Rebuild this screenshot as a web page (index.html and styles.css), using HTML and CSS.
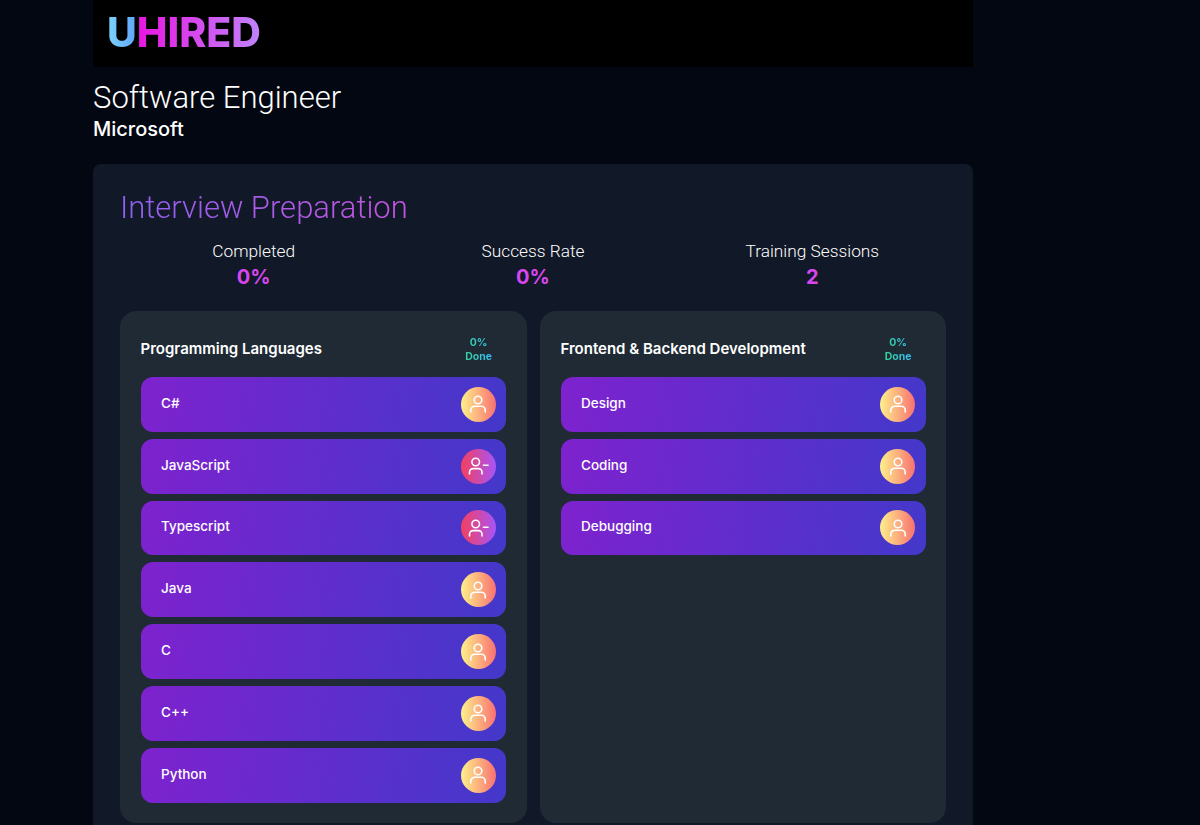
FILE: index.html
```html
<!DOCTYPE html>
<html lang="en">
<head>
  <meta charset="UTF-8">
  <title>UHIRED - Interview Preparation</title>
  <meta name="viewport" content="width=device-width, initial-scale=1.0">
  <link rel="stylesheet" href="styles.css">
</head>
<body>

  <svg class="icon-defs" width="0" height="0" aria-hidden="true">
    <symbol id="icon-user" viewBox="0 0 24 24">
      <path d="M4.8 20v-1.8a4 4 0 0 1 4-4h6.4a4 4 0 0 1 4 4V20"/>
      <circle cx="12" cy="8" r="3.8"/>
    </symbol>
    <symbol id="icon-user-minus" viewBox="0 0 24 24">
      <path d="M3.5 20v-1.8a3.6 3.6 0 0 1 3.6-3.6h5.3a3.6 3.6 0 0 1 3.6 3.6V20"/>
      <circle cx="9.7" cy="8" r="3.8"/>
      <line x1="17.4" y1="11.3" x2="22" y2="11.3"/>
    </symbol>
  </svg>

  <div class="container">
    <header class="topbar">
      <div class="logo"><span class="logo-u">U</span><span class="logo-rest">HIRED</span></div>
    </header>

    <div class="job">
      <h1>Software Engineer</h1>
      <p>Microsoft</p>
    </div>

    <main class="prep">
      <h2>Interview Preparation</h2>

      <div class="stats">
        <div class="stat">
          <div class="stat-label">Completed</div>
          <div class="stat-value">0%</div>
        </div>
        <div class="stat">
          <div class="stat-label">Success Rate</div>
          <div class="stat-value">0%</div>
        </div>
        <div class="stat">
          <div class="stat-label">Training Sessions</div>
          <div class="stat-value">2</div>
        </div>
      </div>

      <div class="panels">
        <section class="panel">
          <div class="panel-head">
            <h3>Programming Languages</h3>
            <div class="done">0%<br>Done</div>
          </div>
          <div class="topic">
            <span>C#</span>
            <div class="avatar"><svg><use href="#icon-user"/></svg></div>
          </div>
          <div class="topic">
            <span>JavaScript</span>
            <div class="avatar avatar-minus"><svg><use href="#icon-user-minus"/></svg></div>
          </div>
          <div class="topic">
            <span>Typescript</span>
            <div class="avatar avatar-minus"><svg><use href="#icon-user-minus"/></svg></div>
          </div>
          <div class="topic">
            <span>Java</span>
            <div class="avatar"><svg><use href="#icon-user"/></svg></div>
          </div>
          <div class="topic">
            <span>C</span>
            <div class="avatar"><svg><use href="#icon-user"/></svg></div>
          </div>
          <div class="topic">
            <span>C++</span>
            <div class="avatar"><svg><use href="#icon-user"/></svg></div>
          </div>
          <div class="topic">
            <span>Python</span>
            <div class="avatar"><svg><use href="#icon-user"/></svg></div>
          </div>
        </section>

        <section class="panel">
          <div class="panel-head">
            <h3>Frontend &amp; Backend Development</h3>
            <div class="done">0%<br>Done</div>
          </div>
          <div class="topic">
            <span>Design</span>
            <div class="avatar"><svg><use href="#icon-user"/></svg></div>
          </div>
          <div class="topic">
            <span>Coding</span>
            <div class="avatar"><svg><use href="#icon-user"/></svg></div>
          </div>
          <div class="topic">
            <span>Debugging</span>
            <div class="avatar"><svg><use href="#icon-user"/></svg></div>
          </div>
        </section>
      </div>
    </main>
  </div>

</body>
</html>
```

FILE: styles.css
```css
* { box-sizing: border-box; }

html, body {
  height: 825px;
  overflow: hidden;
}

body {
  margin: 0;
  background-color: #030712;
  color: white;
  font-family: Inter, "Liberation Sans", sans-serif;
}

.icon-defs {
  position: absolute;
}

.container {
  width: 880px;
  margin-left: 93px;
}

.topbar {
  height: 67px;
  padding: 10px 14px;
  background-color: #000;
}

.logo {
  font-size: 41px;
  line-height: 44px;
  font-weight: 800;
}

.logo-u {
  background: linear-gradient(90deg, #7dd3fc, #60a5fa);
  -webkit-background-clip: text;
  background-clip: text;
  color: transparent;
}

.logo-rest {
  background: linear-gradient(90deg, #e815e0, #c084fc);
  -webkit-background-clip: text;
  background-clip: text;
  color: transparent;
}

.job {
  height: 97px;
  padding-top: 13px;
}

.job h1 {
  margin: 0;
  font-family: Roboto, sans-serif;
  font-size: 31px;
  line-height: 36px;
  font-weight: 300;
}

.job p {
  margin: 0;
  font-size: 20px;
  line-height: 26px;
  font-weight: 500;
}

.prep {
  padding: 24px 27px 27px;
  background-color: #111827;
  border-radius: 8px;
}

.prep h2 {
  margin: 0 0 11px;
  font-family: Roboto, sans-serif;
  font-size: 31px;
  line-height: 40px;
  font-weight: 300;
  width: fit-content;
  background: linear-gradient(90deg, #9061f0, #c455e0);
  -webkit-background-clip: text;
  background-clip: text;
  color: transparent;
}

.stats {
  display: grid;
  grid-template-columns: repeat(3, 1fr);
  gap: 12px;
  margin-bottom: 21px;
}

.stat {
  text-align: center;
}

.stat-label {
  margin-bottom: 1px;
  font-family: Roboto, sans-serif;
  font-size: 17.3px;
  line-height: 24px;
  font-weight: 300;
}

.stat-value {
  font-size: 20px;
  line-height: 26px;
  font-weight: 700;
  color: #d946ef;
}

.panels {
  display: grid;
  grid-template-columns: 406.5px 406px;
  gap: 13.5px;
}

.panel {
  display: flex;
  flex-direction: column;
  gap: 7px;
  min-height: 512px;
  padding: 21px 20.5px 20px;
  background-color: #1f2a35;
  border-radius: 16px;
}

.panel-head {
  display: flex;
  align-items: center;
  justify-content: space-between;
  height: 38px;
}

.panel-head h3 {
  margin: 0 0 6px;
  font-size: 15px;
  font-weight: 600;
}

.done {
  margin: 0 14px 2px 0;
  text-align: center;
  font-size: 10.5px;
  line-height: 14px;
  font-weight: 700;
  background: linear-gradient(90deg, #34d399, #38bdf8);
  -webkit-background-clip: text;
  background-clip: text;
  color: transparent;
}

.topic {
  display: flex;
  align-items: center;
  justify-content: space-between;
  height: 54.8px;
  padding: 0 10.5px 0 20.5px;
  background: linear-gradient(100deg, #7e22ce, #4338ca);
  border-radius: 12px;
  font-size: 13.5px;
  font-weight: 500;
}

.topic span {
  padding-bottom: 3px;
}

.avatar {
  display: flex;
  align-items: center;
  justify-content: center;
  width: 35px;
  height: 35px;
  border-radius: 50%;
  background: linear-gradient(90deg, #fef08a, #f87171);
}

.avatar-minus {
  background: linear-gradient(90deg, #f43f5e, #a855f7);
}

.avatar svg {
  width: 24px;
  height: 24px;
  fill: none;
  stroke: white;
  stroke-width: 1.6;
  stroke-linecap: round;
  stroke-linejoin: round;
}
```
